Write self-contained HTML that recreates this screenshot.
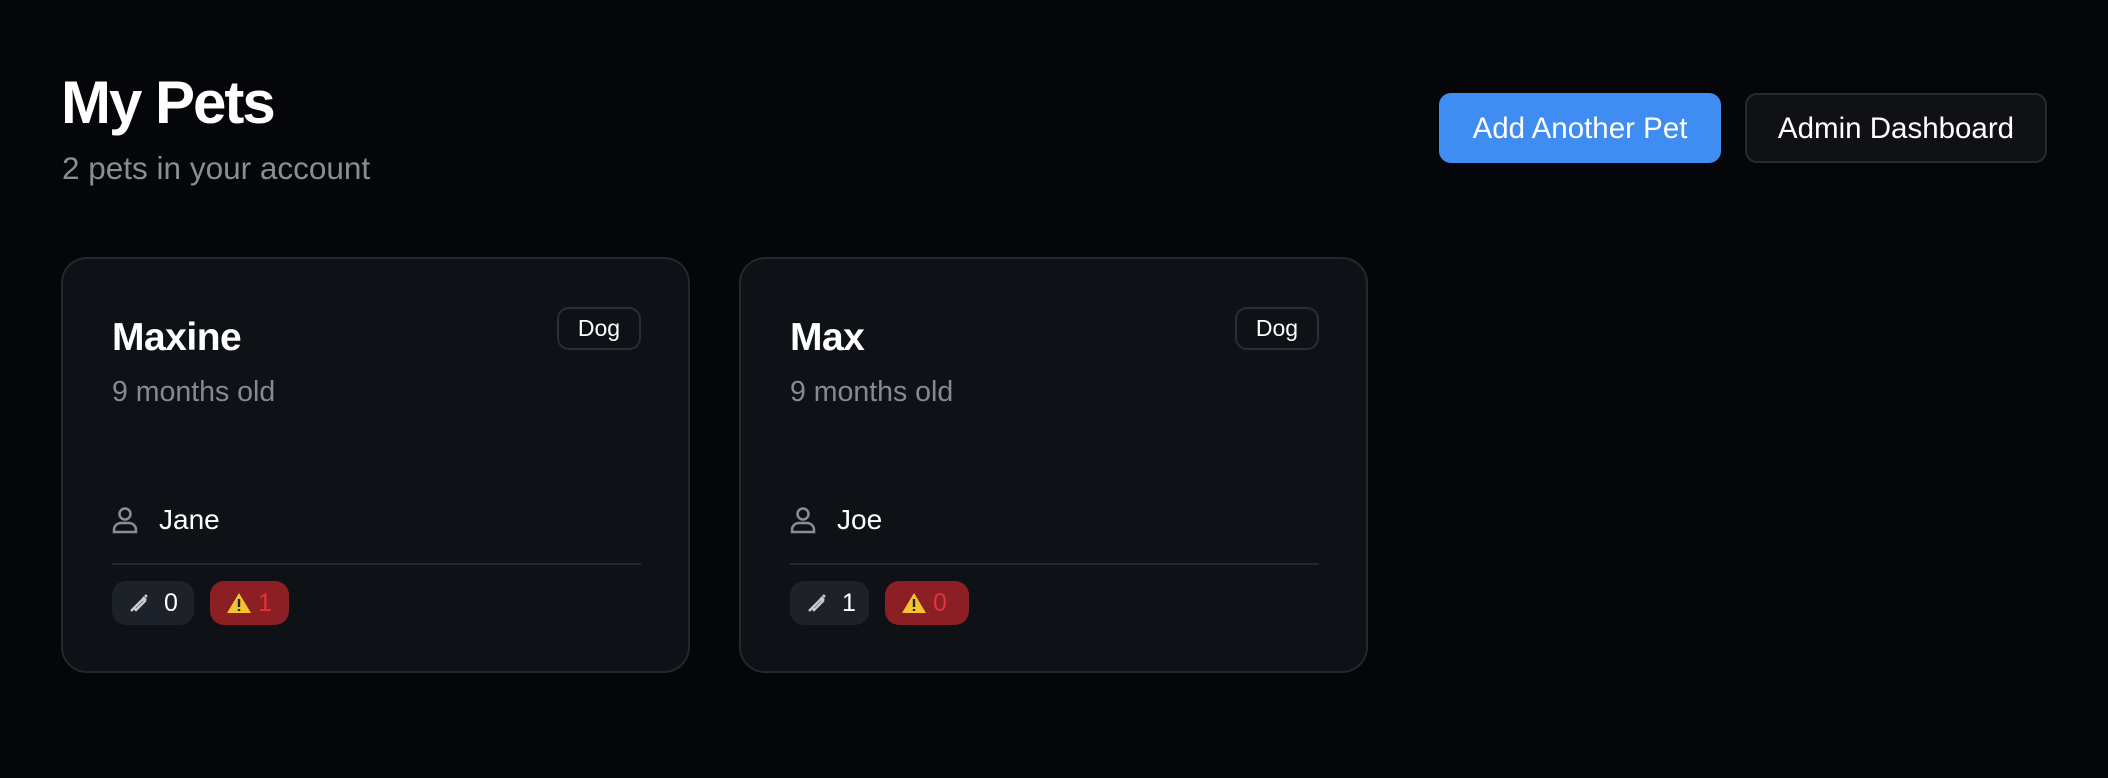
<!DOCTYPE html>
<html><head><meta charset="utf-8"><style>
*{box-sizing:border-box;margin:0;padding:0}
body{width:2108px;height:778px;background:#05060a;font-family:"Liberation Sans",sans-serif;color:#fff;position:relative;overflow:hidden}
h1{position:absolute;left:61px;top:68px;font-size:60px;font-weight:700;letter-spacing:-2px}
.sub{position:absolute;left:62px;top:150px;font-size:31.5px;color:#8a8d93}
.btn{position:absolute;top:93px;height:70px;border-radius:12px;font-size:29.5px;display:flex;align-items:center;justify-content:center;padding-top:2px}
.b1{left:1439px;width:282px;background:#3f8df2}
.b2{left:1745px;width:302px;background:#0f1115;border:2px solid #272a30}
.card{position:absolute;top:257px;width:629px;height:416px;background:#0e1116;border:2px solid #24272d;border-radius:26px}
.name{position:absolute;left:49px;top:57px;font-size:39px;font-weight:700;letter-spacing:-0.5px}
.age{position:absolute;left:49px;top:117px;font-size:28.5px;color:#868a90}
.dog{position:absolute;left:494px;top:48px;width:84px;height:43px;border:2px solid #2a2d33;border-radius:12px;font-size:23px;display:flex;align-items:center;justify-content:center}
.own{position:absolute;left:49px;top:243px;height:36px;display:flex;align-items:center;font-size:28px}
.own svg{margin-right:21px}
.hr{position:absolute;left:49px;right:47px;top:304px;height:2px;background:#24272d}
.p{position:absolute;top:322px;height:44px;border-radius:14px;display:flex;align-items:center;font-size:25px}
.p1{left:49px;width:82px;background:#1d2129;padding-left:16px}
.p2{left:147px;width:79px;background:#8b1f24;padding-left:16px;color:#e0343a}
</style></head><body>
<h1>My Pets</h1>
<div class="sub">2 pets in your account</div>
<div class="btn b1">Add Another Pet</div>
<div class="btn b2">Admin Dashboard</div>

<div class="card" style="left:61px">
<div class="name">Maxine</div><div class="age">9 months old</div><div class="dog">Dog</div>
<div class="own"><svg width="26" height="28" viewBox="0 0 26 28" fill="none" stroke="#8a8d93" stroke-width="2.5"><circle cx="13" cy="8" r="5.5"/><path d="M2 26v-2a7 7 0 0 1 7-7h8a7 7 0 0 1 7 7v2z"/></svg>Jane</div>
<div class="hr"></div>
<div class="p p1"><svg width="22" height="22" viewBox="0 0 22 22"><path d="M3 19l4-4M6 16l9-9 2 2-9 9z M15 5l3 3M17 3l2 2" stroke="#c8ccd2" stroke-width="2.4" fill="none"/></svg><span style="margin-left:14px">0</span></div>
<div class="p p2"><svg width="26" height="22" viewBox="0 0 26 22"><path d="M13 1L25 21H1z" fill="#f4c430"/><path d="M13 7v8M13 17v2" stroke="#222" stroke-width="2.4"/></svg><span style="margin-left:6px">1</span></div>
</div>

<div class="card" style="left:739px">
<div class="name">Max</div><div class="age">9 months old</div><div class="dog">Dog</div>
<div class="own"><svg width="26" height="28" viewBox="0 0 26 28" fill="none" stroke="#8a8d93" stroke-width="2.5"><circle cx="13" cy="8" r="5.5"/><path d="M2 26v-2a7 7 0 0 1 7-7h8a7 7 0 0 1 7 7v2z"/></svg>Joe</div>
<div class="hr"></div>
<div class="p p1" style="width:79px"><svg width="22" height="22" viewBox="0 0 22 22"><path d="M3 19l4-4M6 16l9-9 2 2-9 9z M15 5l3 3M17 3l2 2" stroke="#c8ccd2" stroke-width="2.4" fill="none"/></svg><span style="margin-left:14px">1</span></div>
<div class="p p2" style="left:144px;width:84px"><svg width="26" height="22" viewBox="0 0 26 22"><path d="M13 1L25 21H1z" fill="#f4c430"/><path d="M13 7v8M13 17v2" stroke="#222" stroke-width="2.4"/></svg><span style="margin-left:6px">0</span></div>
</div>
</body></html>
